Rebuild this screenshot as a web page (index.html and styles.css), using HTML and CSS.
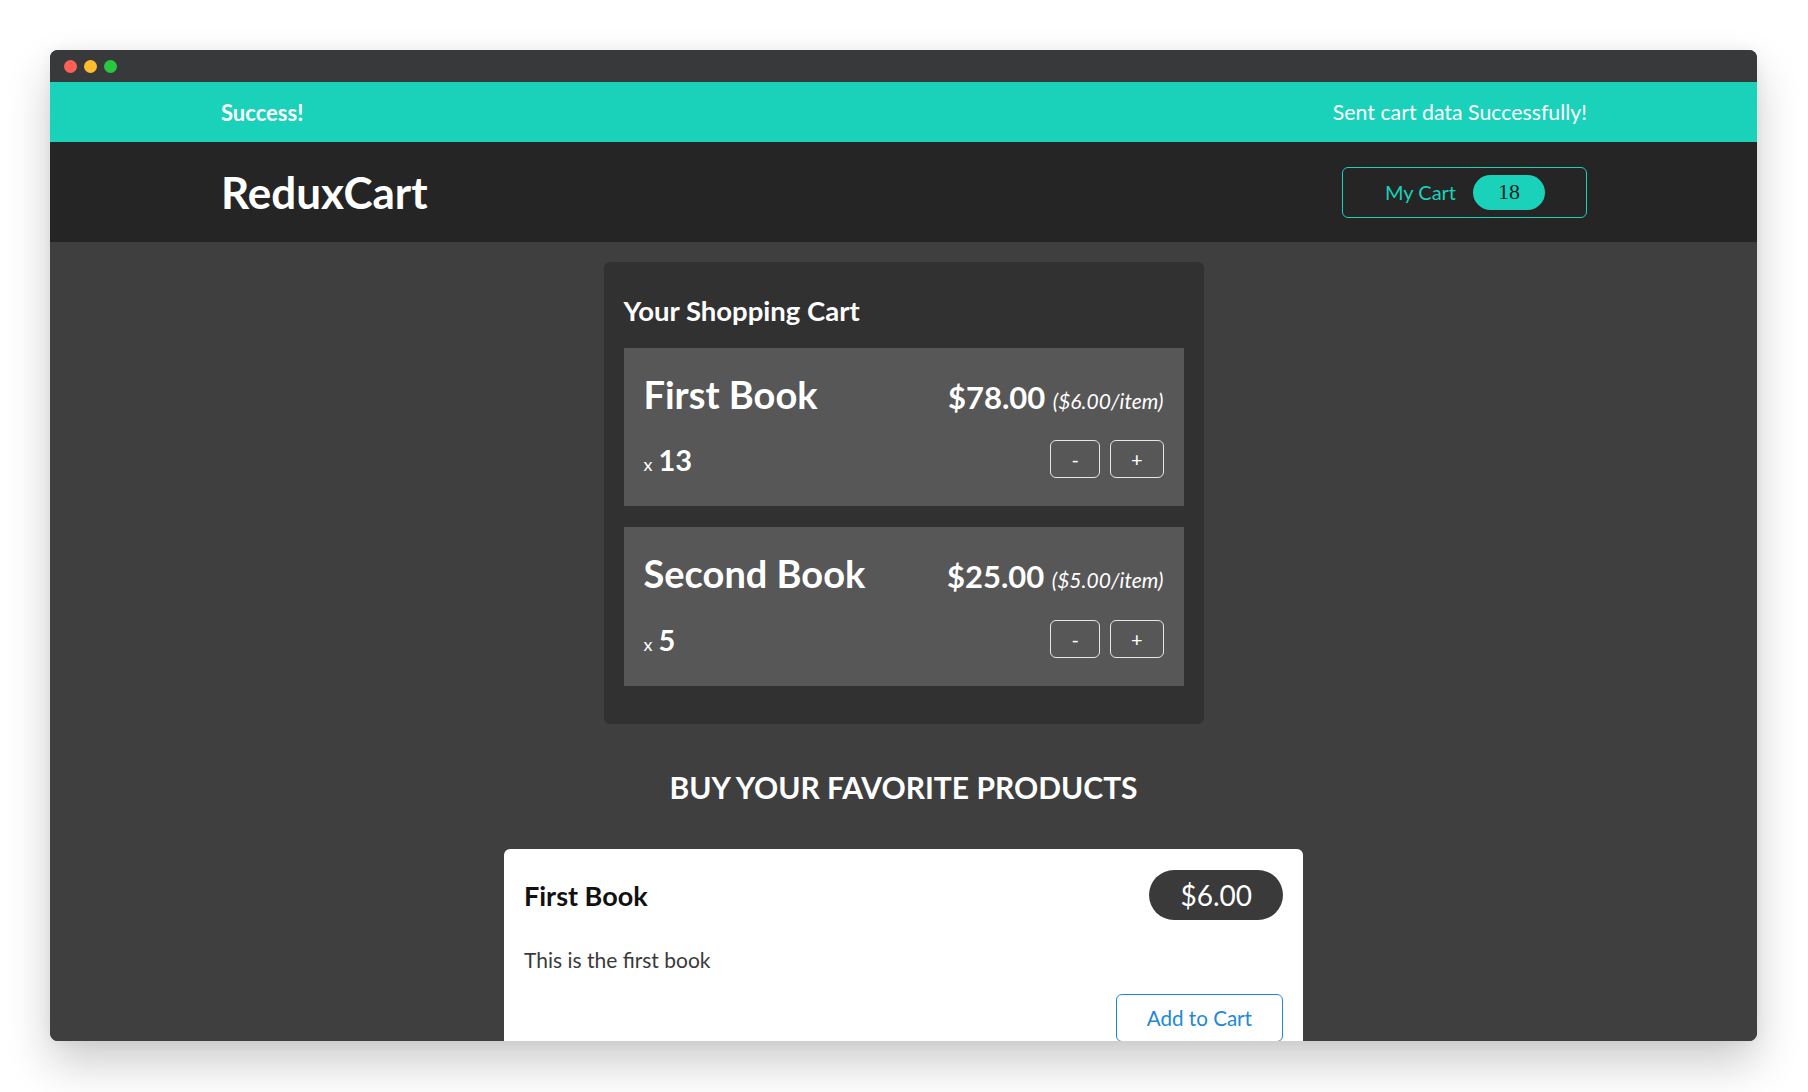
FILE: index.html
```html
<!DOCTYPE html>
<html lang="en">
<head>
<meta charset="utf-8">
<title>ReduxCart</title>
<link rel="stylesheet" href="styles.css">
</head>
<body>
<div class="stage">
  <div class="window">
    <div class="titlebar">
      <span class="dot dot-red"></span>
      <span class="dot dot-yellow"></span>
      <span class="dot dot-green"></span>
    </div>
    <section class="notification">
      <h2 class="notification-title">Success!</h2>
      <p class="notification-message">Sent cart data Successfully!</p>
    </section>
    <header class="main-header">
      <h1 class="logo">ReduxCart</h1>
      <button class="cart-button">
        <span class="cart-button-label">My Cart</span>
        <span class="badge">18</span>
      </button>
    </header>
    <main class="main">
      <div class="cart">
        <h2 class="cart-title">Your Shopping Cart</h2>
        <ul class="cart-list">
          <li class="cart-item">
            <div class="cart-item-top">
              <h3 class="cart-item-name">First Book</h3>
              <div class="cart-item-price">$78.00 <span class="per-item">($6.00/item)</span></div>
            </div>
            <div class="cart-item-bottom">
              <div class="quantity">x <span class="quantity-num">13</span></div>
              <div class="qty-actions">
                <button class="qty-btn">-</button>
                <button class="qty-btn">+</button>
              </div>
            </div>
          </li>
          <li class="cart-item">
            <div class="cart-item-top">
              <h3 class="cart-item-name">Second Book</h3>
              <div class="cart-item-price">$25.00 <span class="per-item">($5.00/item)</span></div>
            </div>
            <div class="cart-item-bottom">
              <div class="quantity">x <span class="quantity-num">5</span></div>
              <div class="qty-actions">
                <button class="qty-btn">-</button>
                <button class="qty-btn">+</button>
              </div>
            </div>
          </li>
        </ul>
      </div>
      <section class="products">
        <h2 class="products-title">BUY YOUR FAVORITE PRODUCTS</h2>
        <div class="product-card">
          <header class="product-header">
            <h3 class="product-name">First Book</h3>
            <div class="product-price">$6.00</div>
          </header>
          <p class="product-desc">This is the first book</p>
          <div class="product-actions">
            <button class="add-btn">Add to Cart</button>
          </div>
        </div>
      </section>
    </main>
  </div>
</div>
</body>
</html>
```
FILE: styles.css
```css
* { box-sizing: border-box; }

html, body {
  margin: 0;
  padding: 0;
  background: #ffffff;
  font-family: Lato, "Noto Sans", sans-serif;
}

.stage {
  width: 1808px;
  height: 1092px;
  padding: 50px 51px 0 50px;
  overflow: hidden;
}

.window {
  height: 991px;
  border-radius: 8px;
  overflow: hidden;
  display: flex;
  flex-direction: column;
  background: #3f3f3f;
  box-shadow: 0 22px 45px rgba(0, 0, 0, 0.2), 0 0 14px rgba(0, 0, 0, 0.05);
}

.titlebar {
  height: 32px;
  flex: none;
  background: #38393b;
  display: flex;
  align-items: center;
  gap: 7px;
  padding-left: 14px;
}

.dot {
  width: 13px;
  height: 13px;
  border-radius: 50%;
}
.dot-red { background: #fe5f57; }
.dot-yellow { background: #febc2e; }
.dot-green { background: #28c840; }

.notification {
  height: 60px;
  flex: none;
  background: #1ad1b9;
  color: #ffffff;
  display: flex;
  justify-content: space-between;
  align-items: center;
  padding: 0 170px 0 171px;
}

.notification-title {
  margin: 0;
  font-size: 22px;
  font-weight: 700;
}

.notification-message {
  margin: 0;
  font-size: 21.3px;
  font-weight: 400;
}

.main-header {
  height: 100px;
  flex: none;
  background: #252525;
  display: flex;
  justify-content: space-between;
  align-items: center;
  padding: 0 170px 0 171px;
}

.logo {
  margin: 0;
  color: #ffffff;
  font-size: 44px;
  font-weight: 700;
}

.cart-button {
  width: 245px;
  height: 51px;
  background: transparent;
  border: 1px solid #1ad1b9;
  border-radius: 6px;
  color: #1ad1b9;
  display: flex;
  align-items: center;
  justify-content: flex-start;
  gap: 17px;
  padding: 0 0 0 42px;
  font-family: Lato, sans-serif;
}

.cart-button-label {
  font-size: 20px;
}

.badge {
  width: 72px;
  height: 35px;
  border-radius: 18px;
  background: #1ad1b9;
  color: #1d1d1d;
  font-family: "Liberation Serif", serif;
  font-size: 22px;
  display: flex;
  align-items: center;
  justify-content: center;
}

.main {
  flex: 1;
  background: #3f3f3f;
  padding-top: 20px;
}

.cart {
  width: 600px;
  margin: 0 auto;
  background: #313131;
  border-radius: 6px;
  padding: 33px 20px 38px;
  color: #ffffff;
}

.cart-title {
  margin: 0 0 21px;
  font-size: 27.5px;
  font-weight: 700;
  line-height: 1.15;
}

.cart-list {
  list-style: none;
  margin: 0;
  padding: 0;
  display: flex;
  flex-direction: column;
  gap: 21px;
}

.cart-item {
  background: #575757;
  padding: 25px 20px 28px;
}

.cart-item-top {
  display: flex;
  justify-content: space-between;
  align-items: baseline;
}

.cart-item-name {
  margin: 0;
  font-size: 38px;
  font-weight: 700;
  line-height: 1.15;
}

.cart-item-price {
  font-size: 31px;
  font-weight: 700;
}

.per-item {
  font-size: 21px;
  font-weight: 400;
  font-style: italic;
}

.cart-item-bottom {
  display: flex;
  justify-content: space-between;
  align-items: center;
  margin-top: 24px;
}

.quantity {
  font-size: 18px;
  display: flex;
  align-items: baseline;
  gap: 6px;
}

.quantity-num {
  font-size: 29px;
  font-weight: 700;
}

.qty-actions {
  display: flex;
  gap: 10px;
}

.qty-btn {
  height: 38px;
  padding: 0 20px;
  background: transparent;
  border: 1px solid #e6e6e6;
  border-radius: 6px;
  color: #ffffff;
  font-family: Lato, sans-serif;
  font-size: 20px;
}

.products {
  margin-top: 45px;
}

.products-title {
  margin: 0 0 44px;
  text-align: center;
  color: #ffffff;
  font-size: 30px;
  font-weight: 700;
}

.product-card {
  width: 799px;
  margin: 0 auto;
  background: #ffffff;
  border-radius: 6px;
  padding: 21px 20px 20px;
}

.product-header {
  display: flex;
  justify-content: space-between;
  align-items: center;
}

.product-name {
  margin: 0;
  color: #111111;
  font-size: 27px;
  font-weight: 700;
}

.product-price {
  height: 50px;
  padding: 0 31px;
  border-radius: 25px;
  background: #3a3a3a;
  color: #ffffff;
  font-size: 28px;
  display: flex;
  align-items: center;
}

.product-desc {
  margin: 27px 0 0;
  color: #3a3a3a;
  font-size: 21px;
}

.product-actions {
  display: flex;
  justify-content: flex-end;
  margin-top: 22px;
}

.add-btn {
  padding: 11px 30px;
  background: transparent;
  border: 1px solid #2188d9;
  border-radius: 6px;
  color: #2188d9;
  font-family: Lato, sans-serif;
  font-size: 20.6px;
}
```
